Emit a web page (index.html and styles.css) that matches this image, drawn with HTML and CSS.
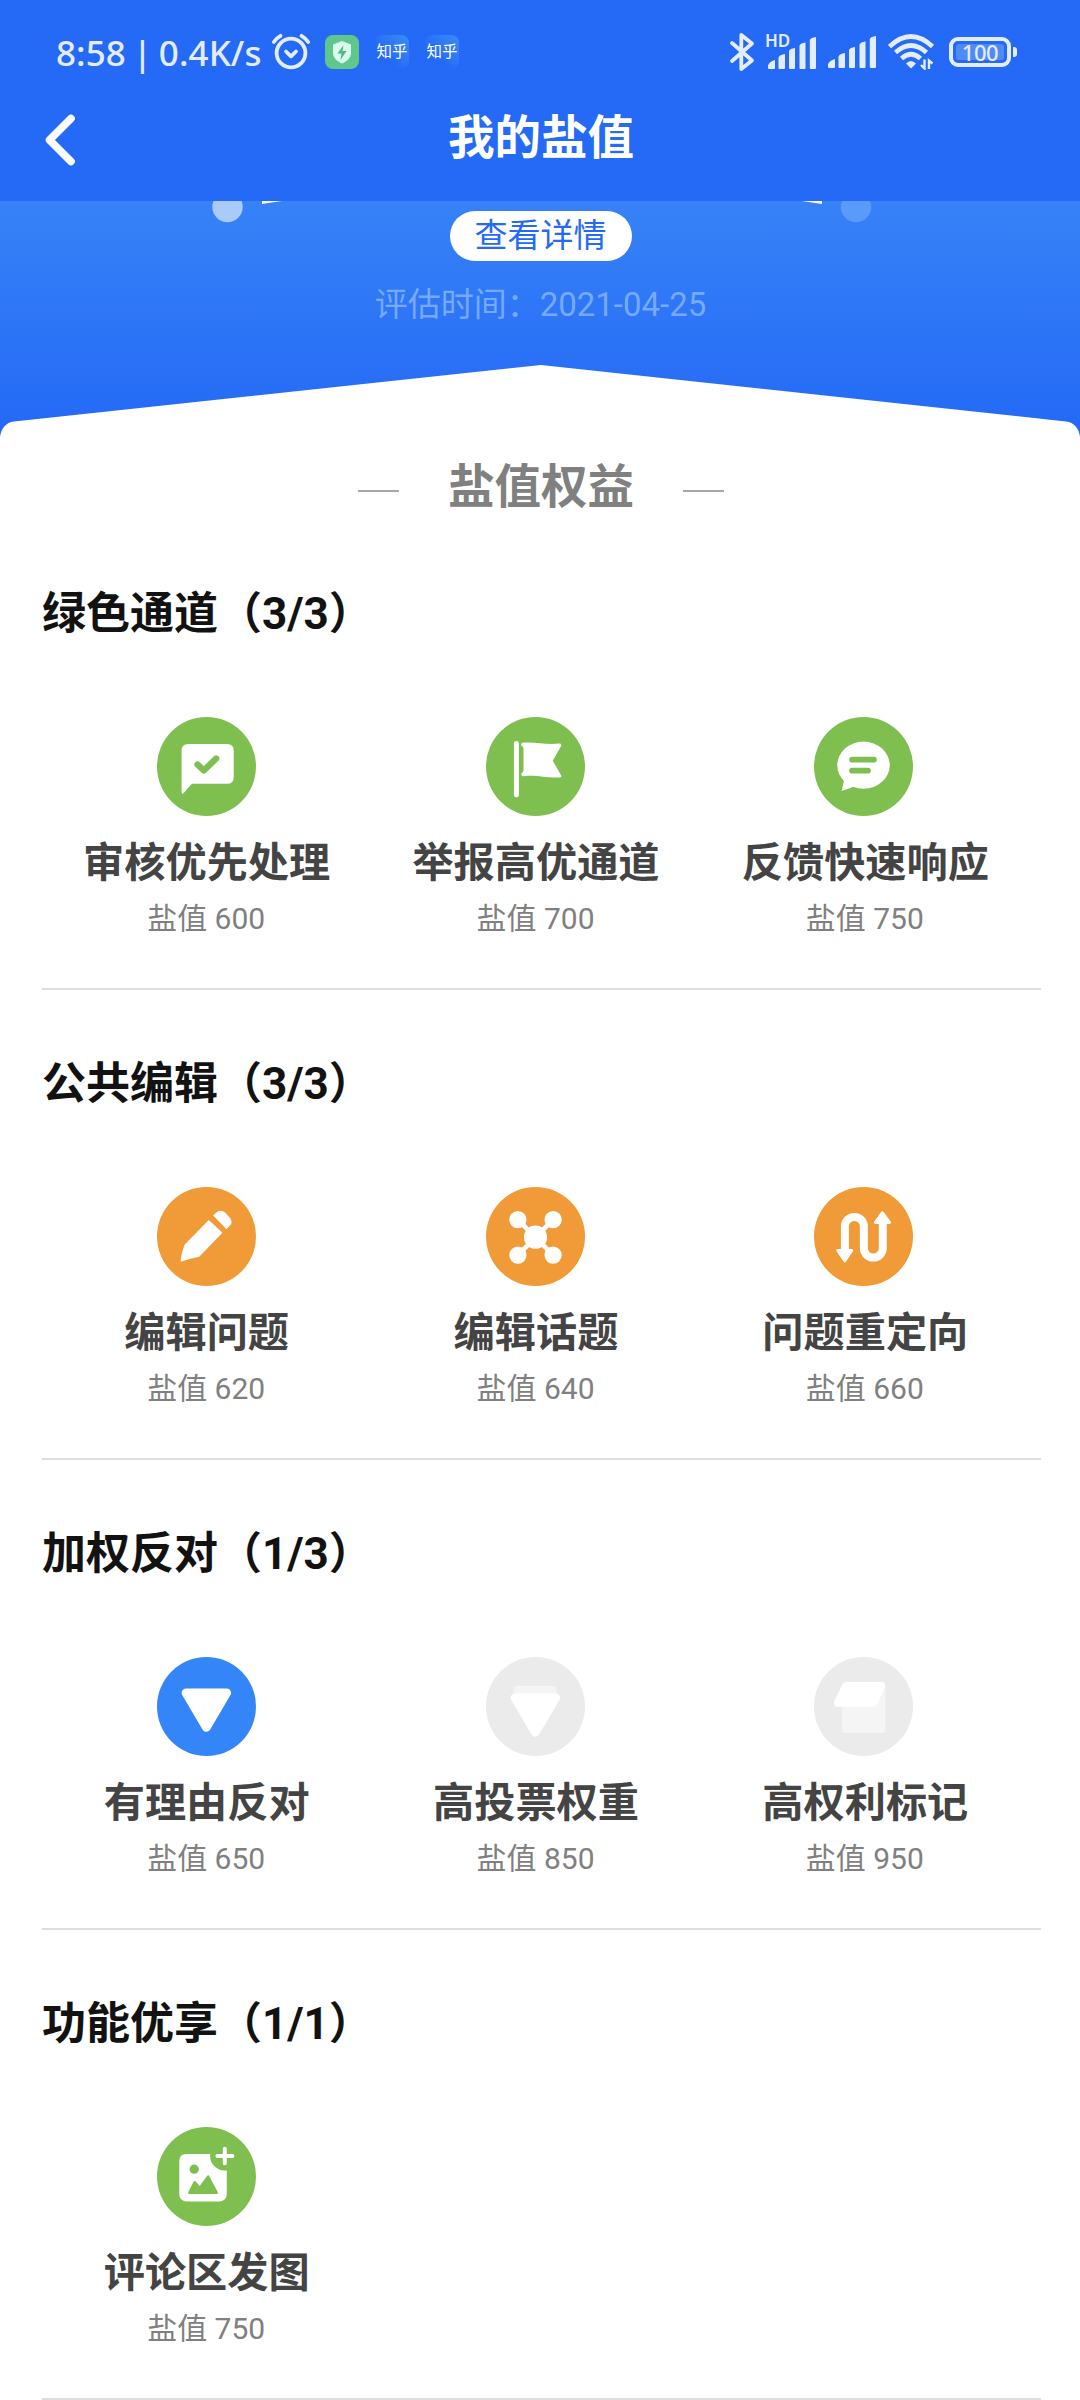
FILE: index.html
```html
<!DOCTYPE html>
<html lang="zh-CN">
<head>
<meta charset="utf-8">
<title>我的盐值</title>
<link rel="stylesheet" href="styles.css">
</head>
<body>
<header class="header">
  <div class="status">
    <span class="clock">8:58 | 0.4K/s</span>
    <svg class="alarm" width="40" height="38" viewBox="0 0 40 38" fill="none" stroke="#e4edfd" stroke-width="3.8" stroke-linecap="round" stroke-linejoin="round"><circle cx="20" cy="20" r="14.4"/><path d="M2.800 9Q5.500 5 9.500 2.800M37.200 9Q34.500 5 30.500 2.800M15 18.500l5 4.800 5-4.800"/></svg>
    <svg class="shield" width="34" height="34" viewBox="0 0 34 34"><rect width="34" height="34" rx="8" fill="#5fc68c"/><path d="M17 6l9 3.500v8.500c0 5-4.500 8.500-9 10.500-4.500-2-9-5.500-9-10.500V9.500z" fill="#d9fdee"/><path d="M18.500 10l-6 8.500h4L15.500 25l6-9h-4z" fill="#4fb781"/></svg>
    <span class="app">知乎</span>
    <span class="app">知乎</span>
    <span class="fill"></span>
    <svg class="bluetooth" width="26" height="40" viewBox="0 0 26 40" fill="none" stroke="#e4edfd" stroke-width="3.800" stroke-linecap="round" stroke-linejoin="round"><path d="M3 11L23 28.500 12.300 37V3L23 11.500 3 29"/></svg>
    <span class="signal"><span class="hd">HD</span><svg width="49" height="32" viewBox="0 0 49 32" fill="#e4edfd"><path d="M0 31v-2.500q1-4 7-5.500v8q0 1-1 1H1q-1 0-1-1zM10.500 31V20.500q1-3 6.500-3.500v14q0 1-1 1h-4.500q-1 0-1-1zM21 31V14q1-2.500 6-3v20q0 1-1 1h-4q-1 0-1-1zM31.500 31V8.500q1-2.500 6-3V31q0 1-1 1h-4q-1 0-1-1zM41.800 31V3q1-2.500 6.200-3v31q0 1-1 1h-4.200q-1 0-1-1z"/></svg></span>
    <svg class="bars" width="49" height="32" viewBox="0 0 49 32" fill="#e4edfd"><path d="M0 31v-2.500q1-4 7-5.500v8q0 1-1 1H1q-1 0-1-1zM10.500 31V20.500q1-3 6.500-3.500v14q0 1-1 1h-4.500q-1 0-1-1zM21 31V14q1-2.500 6-3v20q0 1-1 1h-4q-1 0-1-1zM31.500 31V8.500q1-2.500 6-3V31q0 1-1 1h-4q-1 0-1-1zM41.800 31V3q1-2.500 6.200-3v31q0 1-1 1h-4.200q-1 0-1-1z"/></svg>
    <svg class="wifi" width="47" height="36" viewBox="0 0 47 36" fill="none" stroke="#e4edfd" stroke-width="4.600"><path d="M1.500 12.500Q23 -7.500 44.500 12.500M7.500 18.500Q23 4.500 38.500 18.500M13.500 24.500Q23 16 32.500 24.500"/><path d="M18 29.500q5-5 10 0l-5 5z" fill="#e4edfd" stroke="none"/><path d="M36.500 25.500v9l-3.500-3.500M41 35v-8.500l3.500 3" stroke-width="2.400"/></svg>
    <span class="battery"><span class="level">100</span></span><span class="nub"></span>
  </div>
  <div class="navbar">
    <svg class="back" width="36" height="54" viewBox="0 0 36 54" fill="none" stroke="#fff" stroke-width="7.600" stroke-linecap="round" stroke-linejoin="round"><path d="M29 5.500L7.500 27 29 48.500"/></svg>
    <h1 class="title">我的盐值</h1>
  </div>
</header>

<section class="hero">
  <svg class="gauge" width="1080" height="24" viewBox="0 0 1080 24"><circle cx="227.500" cy="6" r="15.200" fill="#a9cbfb"/><circle cx="856" cy="6" r="15.200" fill="#5a9af8"/><path d="M262 0h20l-20 3zM822 0h-20l20 3z" fill="#fff"/></svg>
  <a class="detail">查看详情</a>
  <p class="date">评估时间：2021-04-25</p>
  <svg class="cap" width="1080" height="72" viewBox="0 0 1080 72" fill="#fff"><path d="M0 72Q2 58 14 56.500L541 0l525 56.500Q1078 58 1080 72z"/></svg>
</section>

<main>
  <h2 class="benefits">盐值权益</h2>

  <section class="group">
    <h3 class="name">绿色通道（3/3）</h3>
    <div class="grid">
      <div class="item">
        <svg class="icon" viewBox="0 0 298 298"><circle cx="149" cy="149" r="149" fill="#7fbf50"/><path d="M94 81H211q20 0 20 20v80q0 20-20 20H105l-26 29q-5 3-5-4V101q0-20 20-20z" fill="#fff"/><path d="M122 143l19 18 37-36" fill="none" stroke="#7fbf50" stroke-width="19" stroke-linecap="round" stroke-linejoin="round"/></svg>
        <h4 class="label">审核优先处理</h4><p class="score">盐值 600</p>
      </div>
      <div class="item">
        <svg class="icon" viewBox="0 0 298 298"><circle cx="149" cy="149" r="149" fill="#7fbf50"/><rect x="84" y="72" width="15" height="170" rx="7.500" fill="#fff"/><path d="M106 83Q106 77 114 77C150 74 175 84 220 80Q229 80 226 87L201 132 226 175Q229 182 220 182C175 183 150 173 114 178Q106 180 106 170 113 167 113 160V95Q113 90 106 86z" fill="#fff"/></svg>
        <h4 class="label">举报高优通道</h4><p class="score">盐值 700</p>
      </div>
      <div class="item">
        <svg class="icon" viewBox="0 0 298 298"><circle cx="149" cy="149" r="149" fill="#7fbf50"/><ellipse cx="149" cy="145" rx="79" ry="71" fill="#fff"/><path d="M88 186l2 8-7 29q17-5 35-13z" fill="#fff"/><path d="M114.500 128.500H180.500M114.500 161.500H162.500" stroke="#7fbf50" stroke-width="17" stroke-linecap="round"/></svg>
        <h4 class="label">反馈快速响应</h4><p class="score">盐值 750</p>
      </div>
    </div>
  </section>

  <section class="group">
    <h3 class="name">公共编辑（3/3）</h3>
    <div class="grid">
      <div class="item">
        <svg class="icon" viewBox="0 0 298 298"><circle cx="149" cy="149" r="149" fill="#f09b38"/><path d="M156 99L197 138 127 210Q98 216 74 224 70 225 71 221 75 192 84 172zM169 86l8-8Q191 66 205 77L218 91Q230 104 219 117L209 127z" fill="#fff"/></svg>
        <h4 class="label">编辑问题</h4><p class="score">盐值 620</p>
      </div>
      <div class="item">
        <svg class="icon" viewBox="0 0 298 298"><circle cx="149" cy="149" r="149" fill="#f09b38"/><g fill="#fff"><circle cx="149" cy="151" r="35"/><circle cx="96" cy="98" r="26"/><circle cx="202" cy="98" r="26"/><circle cx="96" cy="205" r="26"/><circle cx="202" cy="205" r="26"/></g><path d="M96 98L202 205M202 98L96 205" stroke="#fff" stroke-width="14"/></svg>
        <h4 class="label">编辑话题</h4><p class="score">盐值 640</p>
      </div>
      <div class="item">
        <svg class="icon" viewBox="0 0 298 298"><circle cx="149" cy="149" r="149" fill="#f09b38"/><path d="M93 192V118.500a28.500 28.500 0 0 1 57 0V184a28.500 28.500 0 0 0 57 0V107" fill="none" stroke="#fff" stroke-width="24"/><path d="M206 77L184 107H228zM92.500 223L71 191H114z" fill="#fff" stroke="#fff" stroke-width="8" stroke-linejoin="round"/></svg>
        <h4 class="label">问题重定向</h4><p class="score">盐值 660</p>
      </div>
    </div>
  </section>

  <section class="group">
    <h3 class="name">加权反对（1/3）</h3>
    <div class="grid">
      <div class="item">
        <svg class="icon" viewBox="0 0 298 298"><circle cx="149" cy="149" r="149" fill="#3486f8"/><path d="M87 108H210L148.500 212z" fill="#fff" stroke="#fff" stroke-width="26" stroke-linejoin="round"/></svg>
        <h4 class="label">有理由反对</h4><p class="score">盐值 650</p>
      </div>
      <div class="item">
        <svg class="icon" viewBox="0 0 298 298"><circle cx="149" cy="149" r="149" fill="#ebebeb"/><rect x="84" y="87" width="128" height="40" rx="11" fill="#f5f5f5"/><path d="M87 123H210L148.500 227z" fill="#fff" stroke="#fff" stroke-width="26" stroke-linejoin="round"/></svg>
        <h4 class="label">高投票权重</h4><p class="score">盐值 850</p>
      </div>
      <div class="item">
        <svg class="icon" viewBox="0 0 298 298"><circle cx="149" cy="149" r="149" fill="#ebebeb"/><rect x="84" y="76" width="131" height="153" rx="11" fill="#f5f5f5"/><path d="M98 75H204Q217 76 214 91L190 144Q187 150 180 150H70Q58 149 60 136L85 83Q89 75 98 75z" fill="#fff"/></svg>
        <h4 class="label">高权利标记</h4><p class="score">盐值 950</p>
      </div>
    </div>
  </section>

  <section class="group">
    <h3 class="name">功能优享（1/1）</h3>
    <div class="grid">
      <div class="item">
        <svg class="icon" viewBox="0 0 298 298"><circle cx="149" cy="149" r="149" fill="#7fbf50"/><path d="M89 81H160V87A44 44 0 0 0 204 131H210V202q0 22-22 22H89q-22 0-22-22V103q0-22 22-22z" fill="#fff"/><path d="M204 65.500V109.500M182 87H227" stroke="#fff" stroke-width="12" stroke-linecap="round"/><circle cx="112" cy="127" r="14" fill="#7fbf50"/><path d="M97 198L113 166 129 183 154 149 180 198z" fill="#7fbf50" stroke="#7fbf50" stroke-width="7" stroke-linejoin="round"/></svg>
        <h4 class="label">评论区发图</h4><p class="score">盐值 750</p>
      </div>
    </div>
  </section>
</main>
</body>
</html>
```

FILE: styles.css
```css
* { box-sizing: border-box; }
body {
  margin: 0;
  width: 1080px;
  height: 2400px;
  overflow: hidden;
  background: #fff;
  font-family: Roboto, "Noto Sans CJK SC", sans-serif;
}
h1, h2, h3, h4, p { margin: 0; }
svg { display: block; flex: none; }

.header { height: 201px; background: #246af6; }
.status {
  height: 104px;
  padding: 0 63px 0 56px;
  display: flex;
  align-items: center;
  color: #e4edfd;
}
.clock {
  width: 215px;
  padding-top: 1px;
  font: 500 35px/48px "Noto Sans", sans-serif;
  letter-spacing: 0.1px;
  word-spacing: -2.5px;
  white-space: nowrap;
}
.shield { margin-left: 14px; }
.app {
  width: 34px;
  height: 34px;
  margin-left: 16px;
  border-radius: 8px;
  background: linear-gradient(45deg, #246af6 35%, #3b8df5);
  color: #fff;
  font-size: 15.5px;
  line-height: 35px;
  text-align: center;
}
.fill { flex: 1; }
.signal { position: relative; margin-left: 13px; padding-top: 1px; }
.hd {
  position: absolute;
  left: -3px;
  top: -3px;
  font: 600 17px/16px "Noto Sans", sans-serif;
}
.bars { margin-left: 11px; }
.wifi { margin-left: 11px; }
.battery {
  width: 62px;
  height: 30px;
  margin-left: 14px;
  padding: 3px;
  border: 4px solid #e4edfd;
  border-radius: 9px;
}
.level {
  display: block;
  height: 16px;
  border-radius: 3px;
  background: #5089f8;
  font: 500 22px/17px "Noto Sans", sans-serif;
  letter-spacing: -0.5px;
  text-align: center;
}
.nub { width: 4px; height: 10px; margin-left: 2px; border-radius: 0 3px 3px 0; background: #e4edfd; }

.navbar { height: 72px; padding: 0 42px; display: flex; align-items: center; }
.title {
  flex: 1;
  margin: 0 34px 5px 0;
  color: #fff;
  font-size: 46.5px;
  font-weight: 700;
  line-height: 60px;
  text-align: center;
}

.hero {
  position: relative;
  height: 236px;
  padding: 10px 0 0 1px;
  display: flex;
  flex-direction: column;
  align-items: center;
  background: linear-gradient(#3782f7, #246af6 95%);
}
.gauge { position: absolute; left: 0; top: 0; }
.detail {
  width: 182px;
  height: 50px;
  border-radius: 25px;
  background: #fff;
  color: #246af6;
  font-size: 33px;
  line-height: 50px;
  text-align: center;
}
.date { margin-top: 19px; color: #76a9fa; font-size: 33px; line-height: 50px; }
.cap { margin-top: auto; margin-left: -1px; }

.benefits {
  height: 83px;
  padding: 17px 0 0 2px;
  display: flex;
  justify-content: center;
  gap: 49px;
  color: #808080;
  font-size: 46.5px;
  font-weight: 700;
  line-height: 66px;
}
.benefits::before, .benefits::after {
  content: "";
  width: 41px;
  height: 2px;
  margin-top: 36px;
  background: #a8a8a8;
}
.group {
  height: 470px;
  margin: 0 39px 0 42px;
  padding-top: 62px;
  border-bottom: 2px solid #dedede;
}
.name { color: #121212; font-size: 44px; font-weight: 700; line-height: 64px; }
.grid {
  margin: 71px 11px 0 0;
  display: grid;
  grid-template-columns: repeat(3, 1fr);
}
.item { display: flex; flex-direction: column; align-items: center; }
.icon { width: 99px; height: 99px; }
.item:nth-child(3) .icon { margin-right: 3px; }
.label { margin-top: 17px; color: #444; font-size: 41.2px; font-weight: 700; line-height: 60px; white-space: nowrap; }
.score { margin: 6px 1px 0 0; color: #808080; font-size: 30px; line-height: 40px; }
```
